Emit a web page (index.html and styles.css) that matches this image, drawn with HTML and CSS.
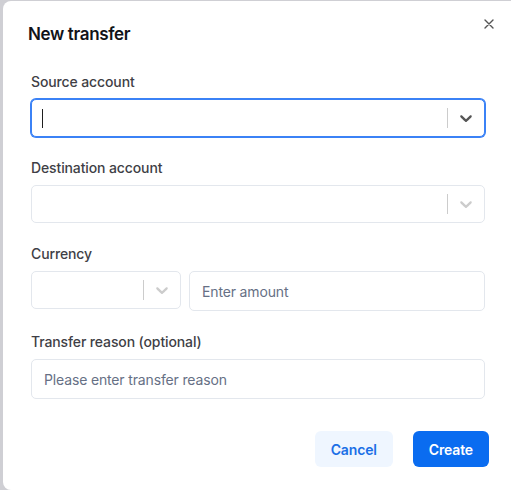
FILE: index.html
```html
<!DOCTYPE html>
<html lang="en">
<head>
<meta charset="utf-8">
<title>New transfer</title>
<link rel="stylesheet" href="styles.css">
</head>
<body>
<div class="backdrop">
  <div class="modal">
    <div class="modal-header">
      <h2 class="modal-title">New transfer</h2>
      <button class="close-btn" aria-label="Close">
        <svg width="10" height="10" viewBox="0 0 10 10"><path d="M1 1L9 9M9 1L1 9" stroke="#555" stroke-width="1.4" stroke-linecap="round" fill="none"/></svg>
      </button>
    </div>
    <form class="modal-body">
      <div class="field">
        <label class="label">Source account</label>
        <div class="select focused">
          <div class="value"><span class="caret"></span></div>
          <span class="sep"></span>
          <span class="indicator dark">
            <svg width="20" height="20" viewBox="0 0 20 20"><path d="M4.516 7.548c0.436-0.446 1.043-0.481 1.576 0l3.908 3.747 3.908-3.747c0.533-0.481 1.141-0.446 1.574 0 0.436 0.445 0.408 1.197 0 1.615-0.406 0.418-4.695 4.502-4.695 4.502-0.217 0.223-0.502 0.335-0.787 0.335s-0.57-0.112-0.789-0.335c0 0-4.287-4.084-4.695-4.502s-0.436-1.17 0-1.615z"/></svg>
          </span>
        </div>
      </div>
      <div class="field">
        <label class="label">Destination account</label>
        <div class="select">
          <div class="value"></div>
          <span class="sep"></span>
          <span class="indicator">
            <svg width="20" height="20" viewBox="0 0 20 20"><path d="M4.516 7.548c0.436-0.446 1.043-0.481 1.576 0l3.908 3.747 3.908-3.747c0.533-0.481 1.141-0.446 1.574 0 0.436 0.445 0.408 1.197 0 1.615-0.406 0.418-4.695 4.502-4.695 4.502-0.217 0.223-0.502 0.335-0.787 0.335s-0.57-0.112-0.789-0.335c0 0-4.287-4.084-4.695-4.502s-0.436-1.17 0-1.615z"/></svg>
          </span>
        </div>
      </div>
      <div class="field">
        <label class="label">Currency</label>
        <div class="row">
          <div class="select currency">
            <div class="value"></div>
            <span class="sep"></span>
            <span class="indicator">
              <svg width="20" height="20" viewBox="0 0 20 20"><path d="M4.516 7.548c0.436-0.446 1.043-0.481 1.576 0l3.908 3.747 3.908-3.747c0.533-0.481 1.141-0.446 1.574 0 0.436 0.445 0.408 1.197 0 1.615-0.406 0.418-4.695 4.502-4.695 4.502-0.217 0.223-0.502 0.335-0.787 0.335s-0.57-0.112-0.789-0.335c0 0-4.287-4.084-4.695-4.502s-0.436-1.17 0-1.615z"/></svg>
            </span>
          </div>
          <input class="input amount" type="text" placeholder="Enter amount">
        </div>
      </div>
      <div class="field">
        <label class="label">Transfer reason (optional)</label>
        <input class="input" type="text" placeholder="Please enter transfer reason">
      </div>
    </form>
    <div class="modal-footer">
      <button class="btn btn-light" type="button">Cancel</button>
      <button class="btn btn-primary" type="button">Create</button>
    </div>
  </div>
</div>
</body>
</html>
```

FILE: styles.css
```css
* { box-sizing: border-box; }

html, body {
  margin: 0;
  padding: 0;
  height: 100%;
  overflow: hidden;
}

body {
  background: #cfcfd4;
  font-family: Inter, "Noto Sans", "Liberation Sans", sans-serif;
}

.backdrop {
  display: flex;
  height: 100%;
  padding: 1px 0 0 3px;
}

.modal {
  flex: 1;
  background: #ffffff;
  border-radius: 8px 0 0 8px;
  display: flex;
  flex-direction: column;
}

.modal-header {
  display: flex;
  justify-content: space-between;
  align-items: flex-start;
  padding: 0 17px 0 25px;
}

.modal-title {
  margin: 21px 0 0;
  font-size: 17px;
  line-height: 24px;
  font-weight: 600;
  color: #111318;
  letter-spacing: -0.35px;
}

.close-btn {
  margin-top: 18px;
  width: 10px;
  height: 10px;
  padding: 0;
  border: 0;
  background: none;
  display: flex;
}

.modal-body {
  display: flex;
  flex-direction: column;
  gap: 21px;
  padding: 26px 26px 0 28px;
  margin: 0;
}

.field {
  display: flex;
  flex-direction: column;
  gap: 7px;
}

.label {
  font-size: 14px;
  line-height: 20px;
  font-weight: 500;
  color: #3f3f46;
  letter-spacing: -0.12px;
}

.select {
  height: 38px;
  border: 1px solid #e3e7ed;
  border-radius: 5px;
  display: flex;
  align-items: center;
  background: #fff;
}

.select.focused {
  border-color: #3b82f6;
  box-shadow: 0 0 0 1px #3b82f6;
}

.value {
  flex: 1;
  height: 100%;
  display: flex;
  align-items: center;
  padding: 2px 8px;
}

.caret {
  width: 1px;
  height: 19px;
  margin-left: 2px;
  background: #1f1f1f;
}

.sep {
  width: 1px;
  align-self: stretch;
  margin: 8px 0;
  background: #cccccc;
}

.indicator {
  display: flex;
  padding: 8px;
  fill: #cccccc;
}

.indicator.dark {
  fill: #555555;
}

.row {
  display: flex;
  gap: 8px;
  align-items: flex-start;
}

.currency {
  width: 150px;
  flex: none;
}

.input {
  height: 40px;
  border: 1px solid #e3e7ed;
  border-radius: 5px;
  padding: 0 12px;
  font-family: inherit;
  font-size: 14px;
  letter-spacing: -0.15px;
  color: #1f2937;
  width: 100%;
  outline: none;
}

.amount {
  flex: 1;
}

.input::placeholder {
  color: #667085;
}

.modal-footer {
  display: flex;
  justify-content: flex-end;
  gap: 20px;
  padding: 32px 22px 0 0;
}

.btn {
  height: 36px;
  padding: 0 16px;
  border: 0;
  border-radius: 6px;
  font-family: inherit;
  font-size: 14px;
  font-weight: 600;
  letter-spacing: -0.15px;
}

.btn-light {
  background: #eff6ff;
  color: #1b6fe6;
}

.btn-primary {
  background: #0a6cf0;
  color: #ffffff;
}
```
